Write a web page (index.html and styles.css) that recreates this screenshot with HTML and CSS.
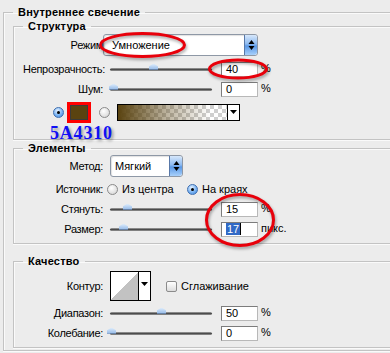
FILE: index.html
```html
<!DOCTYPE html>
<html lang="ru">
<head>
  <meta charset="UTF-8" />
  <title>Внутреннее свечение</title>
  <link rel="stylesheet" href="styles.css">
</head>
<body>

  <fieldset class="group outer">
    <legend>Внутреннее свечение</legend>

    <fieldset class="group structure">
      <legend>Структура</legend>

      <div class="row h22">
        <span class="label">Режим</span>
        <div class="select mode">
          <span>Умножение</span>
          <i class="spin"><svg width="7" height="12" viewBox="0 0 7 12"><path d="M3.5 1 L6.5 5 L0.5 5 Z M3.5 11 L6.5 7 L0.5 7 Z" fill="#000"/></svg></i>
        </div>
      </div>

      <div class="row mt3">
        <span class="label">Непрозрачность:</span>
        <div class="slider"><i class="thumb" style="left: 39px"></i></div>
        <div class="num">40</div><span class="unit">%</span>
      </div>

      <div class="row">
        <span class="label">Шум:</span>
        <div class="slider"><i class="thumb" style="left: -1px"></i></div>
        <div class="num">0</div><span class="unit">%</span>
      </div>

      <div class="row h22 mt2 colors">
        <i class="radio on"></i>
        <div class="swatch">
          <b></b>
          <span class="hex">5A4310</span>
        </div>
        <i class="radio"></i>
        <div class="gradient">
          <b></b>
          <span class="drop"><svg width="7" height="4" viewBox="0 0 7 4"><path d="M0 0 H7 L3.5 4 Z" fill="#000"/></svg></span>
        </div>
      </div>
    </fieldset>

    <fieldset class="group elements">
      <legend>Элементы</legend>

      <div class="row h22">
        <span class="label">Метод:</span>
        <div class="select method">
          <span>Мягкий</span>
          <i class="spin"><svg width="7" height="12" viewBox="0 0 7 12"><path d="M3.5 1 L6.5 5 L0.5 5 Z M3.5 11 L6.5 7 L0.5 7 Z" fill="#000"/></svg></i>
        </div>
      </div>

      <div class="row mt2">
        <span class="label">Источник:</span>
        <label class="option first"><i class="radio"></i>Из центра</label>
        <label class="option"><i class="radio on"></i>На краях</label>
      </div>

      <div class="row">
        <span class="label">Стянуть:</span>
        <div class="slider"><i class="thumb" style="left: 13px"></i></div>
        <div class="num">15</div><span class="unit">%</span>
      </div>

      <div class="row">
        <span class="label">Размер:</span>
        <div class="slider"><i class="thumb" style="left: 9px"></i></div>
        <div class="num"><span class="sel">17</span><i class="caret"></i></div><span class="unit">пикс.</span>
      </div>
    </fieldset>

    <fieldset class="group quality">
      <legend>Качество</legend>

      <div class="row h30">
        <span class="label">Контур:</span>
        <div class="contour">
          <b></b>
          <span class="drop"><svg width="7" height="4" viewBox="0 0 7 4"><path d="M0 0 H7 L3.5 4 Z" fill="#000"/></svg></span>
        </div>
        <label class="check"><i class="box"></i>Сглаживание</label>
      </div>

      <div class="row mt2">
        <span class="label">Диапазон:</span>
        <div class="slider"><i class="thumb" style="left: 47px"></i></div>
        <div class="num">50</div><span class="unit">%</span>
      </div>

      <div class="row">
        <span class="label">Колебание:</span>
        <div class="slider"><i class="thumb" style="left: -3px"></i></div>
        <div class="num">0</div><span class="unit">%</span>
      </div>
    </fieldset>
  </fieldset>

  <!-- red marks drawn over the dialog -->
  <svg class="marks" width="390" height="353" viewBox="0 0 390 353">
    <ellipse cx="142.5" cy="45" rx="42" ry="11.5" />
    <ellipse cx="238" cy="69" rx="28.5" ry="9" />
    <ellipse cx="240" cy="220" rx="33.5" ry="25.5" />
  </svg>

</body>
</html>
```

FILE: styles.css
```css
body {
  margin: 0;
  background: #ececec;
  font-family: "Liberation Sans", Arial, sans-serif;
  font-size: 11px;
  color: #000;
  position: relative;
  overflow: hidden;
  height: 353px;
}

/* group boxes run off the right edge, so no right border */
.group {
  margin: 0;
  padding: 0 0 4px 9px;
  border: 1px solid #c3c3c3;
  border-right: 0;
  box-shadow: inset 1px 1px 0 #fafafa, 0 1px 0 #fafafa;
  min-width: 0;
}

.group legend {
  padding: 0 5px;
  font-weight: bold;
  line-height: 14px;
  letter-spacing: 0.2px;
}

.outer {
  margin: 5px 0 0 3px;
  padding-bottom: 2px;
}

.structure {
  padding-top: 1px;
  padding-bottom: 16px;
}

.elements {
  margin-top: 1px;
}

.quality {
  margin-top: 10px;
  padding-top: 3px;
}

.row {
  display: flex;
  align-items: center;
  height: 20px;
}

.h22 { height: 22px; }
.h30 { height: 30px; }
.mt2 { margin-top: 2px; }
.mt3 { margin-top: 3px; }

.label {
  width: 80px;
  text-align: right;
  white-space: nowrap;
  letter-spacing: -0.3px;
}

/* drop-down lists */
.select {
  display: flex;
  align-items: center;
  justify-content: space-between;
  height: 20px;
  background: #fff;
  border: 1px solid #8e98a6;
  border-radius: 3px;
  box-shadow: inset 1px 1px 1px rgba(0,0,0,0.12);
}

.select span {
  padding-left: 8px;
}

.mode {
  margin-left: 0;
  width: 153px;
}

.method {
  margin-left: 7px;
  width: 71px;
}

.method span {
  padding-left: 4px;
}

.spin {
  display: flex;
  align-items: center;
  justify-content: center;
  width: 12px;
  height: 20px;
  border-left: 1px solid #5878a8;
  border-radius: 0 3px 3px 0;
  background: linear-gradient(#d6e7fb, #8dbaf0 45%, #5a98e6 55%, #a8d0fa);
}

/* sliders */
.slider {
  position: relative;
  margin-left: 7px;
  width: 102px;
  height: 3px;
  border-radius: 2px;
  background: linear-gradient(#a8a8a8, #4c4c4c 50%, #9a9a9a);
}

.thumb {
  position: absolute;
  top: -4px;
  width: 9px;
  height: 6px;
  background: linear-gradient(#dcebfb, #8fb6e6);
  clip-path: polygon(0 100%, 0 45%, 50% 0, 100% 45%, 100% 100%);
}

.thumb::after {
  content: "";
  position: absolute;
  left: 0;
  right: 0;
  bottom: 0;
  height: 1px;
  background: #5f82b4;
}

.num {
  display: flex;
  align-items: center;
  box-sizing: border-box;
  margin-left: 9px;
  width: 37px;
  height: 15px;
  padding-left: 4px;
  background: #fff;
  border: 1px solid #7c7c7c;
  border-right-color: #b8b8b8;
  border-bottom-color: #b8b8b8;
}

.num .sel {
  background: #3169c6;
  color: #fff;
  padding: 0 1px;
  line-height: 12px;
}

.caret {
  width: 1px;
  height: 12px;
  background: #000;
}

.unit {
  margin-left: 3px;
  margin-top: -3px;
}

/* radios and checkbox */
.radio {
  box-sizing: border-box;
  width: 11px;
  height: 11px;
  border-radius: 50%;
  border: 1px solid #8b8b8b;
  background: radial-gradient(circle at 40% 35%, #ffffff, #dedede 70%, #c4c4c4);
}

.radio.on {
  position: relative;
  border-color: #3f6fb0;
  background: radial-gradient(circle at 40% 30%, #e6f2ff, #7ab3f2 55%, #3c86e0);
}

.radio.on::after {
  content: "";
  position: absolute;
  left: 3px;
  top: 3px;
  width: 3px;
  height: 3px;
  border-radius: 50%;
  background: #000;
}

.colors {
  padding-left: 30px;
}

.swatch {
  position: relative;
  box-sizing: border-box;
  margin-left: 3px;
  margin-right: 8px;
  width: 24px;
  height: 21px;
  border: 3px solid #ff0000;
  background: #3a3a3a;
  padding: 1px;
}

.swatch b {
  display: block;
  height: 100%;
  background: #5a4310;
}

/* colour code written under the swatch */
.hex {
  position: absolute;
  left: -20px;
  top: 21px;
  font-family: "Liberation Serif", "Times New Roman", serif;
  font-size: 18px;
  line-height: 14px;
  font-weight: bold;
  letter-spacing: 0.8px;
  color: #1010f4;
  text-shadow: 2px 2px 3px rgba(0,0,0,0.35);
}

.gradient {
  display: flex;
  box-sizing: border-box;
  margin-left: 7px;
  width: 123px;
  height: 17px;
  border: 1px solid #000;
  background-color: #fff;
  background-image:
    linear-gradient(45deg, #cfcfcf 25%, transparent 25%, transparent 75%, #cfcfcf 75%),
    linear-gradient(45deg, #cfcfcf 25%, transparent 25%, transparent 75%, #cfcfcf 75%);
  background-size: 8px 8px;
  background-position: 0 0, 4px 4px;
}

.gradient b {
  flex: 1;
  background: linear-gradient(to right, #5a4310, rgba(90,67,16,0.4) 45%, rgba(90,67,16,0) 85%);
}

.drop {
  display: flex;
  align-items: center;
  justify-content: center;
  width: 11px;
  background: #fff;
  border-left: 1px solid #000;
}

.option {
  display: flex;
  align-items: center;
  gap: 4px;
}

.option.first {
  margin-left: 4px;
  width: 80px;
}

.contour {
  display: flex;
  box-sizing: border-box;
  margin-left: 7px;
  width: 41px;
  height: 30px;
  border: 1px solid #000;
}

.contour b {
  flex: 1;
  background: linear-gradient(to bottom right, #fff 50%, #c2c2c2 50%);
}

.contour .drop {
  align-items: flex-start;
  padding-top: 10px;
}

.check {
  display: flex;
  align-items: center;
  gap: 4px;
  margin-left: 15px;
}

.box {
  box-sizing: border-box;
  width: 11px;
  height: 11px;
  border: 1px solid #8b8b8b;
  border-radius: 2px;
  background: linear-gradient(#fff, #dcdcdc);
}

.marks {
  position: absolute;
  left: 0;
  top: 0;
  pointer-events: none;
  filter: drop-shadow(1px 2px 1.5px rgba(0,0,0,0.35));
}

.marks ellipse {
  fill: none;
  stroke: #e8000b;
  stroke-width: 3;
}
```
